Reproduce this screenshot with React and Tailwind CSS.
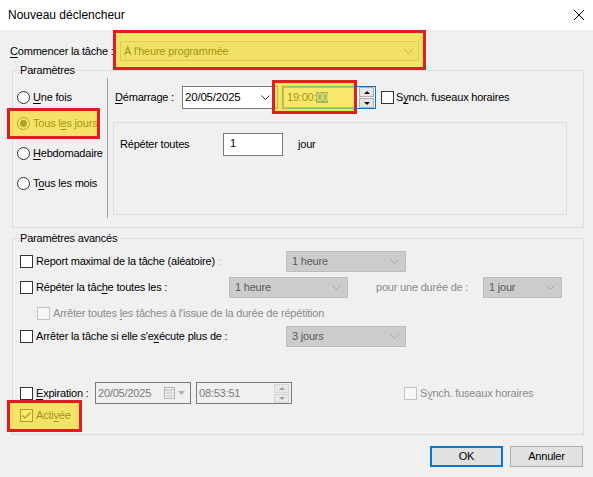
import React from 'react'

// Accélérateur clavier souligné (style Windows).
function U({ children }) {
  return <span className="underline decoration-1 underline-offset-[2px]">{children}</span>
}

function Chevron({ color = '#606060' }) {
  return (
    <svg width="9" height="5" viewBox="0 0 9 5" className="shrink-0">
      <polyline points="0.5,0.5 4.5,4.5 8.5,0.5" fill="none" stroke={color} strokeWidth="1" />
    </svg>
  )
}

function Radio({ checked }) {
  return (
    <span className="w-[13px] h-[13px] rounded-full border border-[#333] bg-white flex items-center justify-center shrink-0">
      {checked && <span className="w-[7px] h-[7px] rounded-full bg-[#333]" />}
    </span>
  )
}

function Check({ checked, disabled }) {
  if (disabled) return <span className="w-[13px] h-[13px] border border-[#c4c4c4] bg-[#f7f7f7] shrink-0" />
  return (
    <span className="w-[13px] h-[13px] border border-[#333] bg-white shrink-0 flex items-center justify-center">
      {checked && (
        <svg width="11" height="11" viewBox="0 0 11 11">
          <polyline points="1.5,5.5 4,8 9.5,2.5" fill="none" stroke="#222" strokeWidth="1.2" />
        </svg>
      )}
    </span>
  )
}

function Combo({ className, value }) {
  return (
    <div className={`h-[21px] bg-[#cccccc] border border-[#bdbdbd] flex items-center justify-between pl-[5px] pr-[6px] text-[#5a5a5a] ${className}`}>
      <span>{value}</span>
      <Chevron color="#a8a8a8" />
    </div>
  )
}

function Spin({ disabled }) {
  const c = disabled ? '#a0a0a0' : '#111'
  const btn = disabled
    ? 'h-[9px] bg-[#e8e8e8] border border-[#d4d4d4] flex items-center justify-center'
    : 'h-[10px] bg-[#e5e5e5] border border-[#adadad] flex items-center justify-center'
  return (
    <div className="flex flex-col gap-[1px] w-[15px] shrink-0">
      <div className={btn}>
        <svg width="6" height="3" viewBox="0 0 6 3"><polygon points="3,0 6,3 0,3" fill={c} /></svg>
      </div>
      <div className={btn}>
        <svg width="6" height="3" viewBox="0 0 6 3"><polygon points="0,0 6,0 3,3" fill={c} /></svg>
      </div>
    </div>
  )
}

function Highlight({ className }) {
  return <div className={`absolute border-[3px] border-[#e31b23] bg-[rgba(245,221,29,0.65)] ${className}`} />
}

export default function App() {
  return (
    <div className="w-[593px] h-[477px] bg-[#f0f0f0] relative overflow-hidden text-[11px] tracking-[-0.2px] leading-none text-black font-['Liberation_Sans',Arial,sans-serif]">
      {/* Barre de titre */}
      <div className="h-[30px] bg-white flex items-center justify-between pl-[8px] pr-[9px] text-[12px] tracking-normal">
        <span>Nouveau déclencheur</span>
        <svg width="10" height="10" viewBox="0 0 10 10">
          <line x1="0" y1="0" x2="10" y2="10" stroke="#000" strokeWidth="1" />
          <line x1="10" y1="0" x2="0" y2="10" stroke="#000" strokeWidth="1" />
        </svg>
      </div>

      {/* Commencer la tâche */}
      <div className="flex items-center h-[20px] mt-[11px] pl-[10px]">
        <span className="w-[110px]"><U>C</U>ommencer la tâche :</span>
        <div className="w-[299px] h-[20px] bg-[#e9e9e9] border border-[#adadad] flex items-center justify-between pl-[3px] pr-[5px]">
          <span>À l'heure programmée</span>
          <Chevron />
        </div>
      </div>

      {/* Paramètres */}
      <div className="relative mt-[9px] ml-[12px] w-[572px] h-[158px] border border-[#dcdcdc] flex">
        <span className="absolute left-[6px] -top-[6px] px-[1px] bg-[#f0f0f0]">Paramètres</span>

        <div className="w-[94px] pl-[4px] flex flex-col">
          <div className="flex items-center gap-[3px] h-[20px] mt-[16px]"><Radio /><span><U>U</U>ne fois</span></div>
          <div className="flex items-center gap-[3px] h-[20px] mt-[6px]"><Radio checked /><span>Tous l<U>e</U>s jours</span></div>
          <div className="flex items-center gap-[3px] h-[20px] mt-[10px]"><Radio /><span><U>H</U>ebdomadaire</span></div>
          <div className="flex items-center gap-[3px] h-[20px] mt-[10px]"><Radio /><span>T<U>o</U>us les mois</span></div>
        </div>

        <div className="w-px h-[140px] mt-[7px] bg-[#a0a0a0]" />

        <div className="flex flex-col">
          <div className="flex items-center h-[23px] mt-[15px] pl-[7px]">
            <span className="w-[67px]"><U>D</U>émarrage :</span>
            <div className="w-[96px] h-[23px] bg-white border border-[#7a7a7a] flex items-center justify-between pl-[2px] pr-[7px] text-[11.5px]">
              <span>20/05/2025</span>
              <Chevron color="#333" />
            </div>
            <div className="ml-[4px] w-[94px] h-[23px] border border-[#0078d7] bg-white flex items-center">
              <div className="flex-1 h-full border border-[#8a8a8a] flex items-center pl-[3px]">
                19:00:<span className="bg-[#0078d7] text-white">00</span>
              </div>
              <div className="ml-[3px] mr-[1px]"><Spin /></div>
            </div>
            <div className="ml-[5px]"><Check /></div>
            <span className="ml-[2px]">S<U>y</U>nch. fuseaux horaires</span>
          </div>

          <div className="ml-[5px] mt-[13px] w-[454px] h-[93px] border border-[#dcdcdc] pt-[10px] pl-[6px]">
            <div className="flex items-center h-[23px]">
              <span className="w-[103px]">Répéter toutes</span>
              <div className="w-[60px] h-[23px] bg-white border border-[#7a7a7a] pl-[6px] pt-[4px]">1</div>
              <span className="ml-[15px]">jour</span>
            </div>
          </div>
        </div>
      </div>

      {/* Paramètres avancés */}
      <div className="relative mt-[10px] ml-[12px] w-[572px] h-[197px] border border-[#dcdcdc] flex flex-col pl-[7px]">
        <span className="absolute left-[6px] -top-[6px] px-[1px] bg-[#f0f0f0]">Paramètres avancés</span>

        <div className="flex items-center h-[21px] mt-[12px]">
          <div className="w-[266px] flex items-center">
            <Check />
            <span className="ml-[3px]">Report maximal de la tâche (aléatoire) <span className="text-[#b4b4b4]">:</span></span>
          </div>
          <Combo className="w-[120px]" value="1 heure" />
        </div>

        <div className="flex items-center h-[21px] mt-[5px]">
          <div className="w-[209px] flex items-center">
            <Check />
            <span className="ml-[3px]">Répéter la tâc<U>h</U>e toutes les :</span>
          </div>
          <Combo className="w-[119px]" value="1 heure" />
          <span className="w-[107px] ml-[28px] text-[#8a8a8a]">pour une durée de :</span>
          <Combo className="w-[79px]" value="1 jour" />
        </div>

        <div className="flex items-center h-[20px] mt-[5px] pl-[17px]">
          <Check disabled />
          <span className="ml-[3px] text-[#8a8a8a]">Arrêter toutes <U>l</U>es tâches à l'issue de la durée de répétition</span>
        </div>

        <div className="flex items-center h-[21px] mt-[3px]">
          <div className="w-[266px] flex items-center">
            <Check />
            <span className="ml-[3px]">Arrêter la tâche si elle s'e<U>x</U>écute plus de :</span>
          </div>
          <Combo className="w-[120px]" value="3 jours" />
        </div>

        <div className="flex items-center h-[22px] mt-[35px]">
          <div className="w-[75px] flex items-center">
            <Check />
            <span className="ml-[3px]"><U>E</U>xpiration :</span>
          </div>
          <div className="w-[96px] h-[22px] border border-[#7a7a7a] flex items-center justify-between pl-[2px] pr-[5px] text-[#7a7a7a]">
            <span>20/05/2025</span>
            <span className="flex items-center gap-[3px]">
              <svg width="11" height="12" viewBox="0 0 11 12">
                <rect x="0.5" y="0.5" width="10" height="11" fill="#f4f4f4" stroke="#b5b5b5" />
                <line x1="0.5" y1="3" x2="10.5" y2="3" stroke="#b5b5b5" />
                <line x1="0.5" y1="6" x2="10.5" y2="6" stroke="#cfcfcf" />
                <line x1="0.5" y1="9" x2="10.5" y2="9" stroke="#cfcfcf" />
                <line x1="4" y1="3" x2="4" y2="11.5" stroke="#cfcfcf" />
                <line x1="7" y1="3" x2="7" y2="11.5" stroke="#cfcfcf" />
              </svg>
              <svg width="7" height="4" viewBox="0 0 7 4"><polygon points="0,0 7,0 3.5,4" fill="#b0b0b0" /></svg>
            </span>
          </div>
          <div className="ml-[5px] w-[96px] h-[22px] border border-[#7a7a7a] flex items-center justify-between pl-[2px] pr-[2px] text-[#7a7a7a]">
            <span>08:53:51</span>
            <Spin disabled />
          </div>
          <div className="ml-[112px] flex items-center">
            <Check disabled />
            <span className="ml-[3px] text-[#8a8a8a]">S<U>y</U>nch. fuseaux horaires</span>
          </div>
        </div>

        <div className="flex items-center h-[14px] mt-[4px]">
          <Check checked />
          <span className="ml-[3px]">Acti<U>v</U>ée</span>
        </div>
      </div>

      {/* Boutons */}
      <div className="mt-[11px] flex justify-end gap-[7px] pr-[10px]">
        <button className="w-[73px] h-[21px] border-2 border-[#0078d7] bg-[#e1e1e1] flex items-center justify-center">OK</button>
        <button className="w-[73px] h-[21px] border border-[#adadad] bg-[#e1e1e1] flex items-center justify-center">Annuler</button>
      </div>

      {/* Surlignages */}
      <Highlight className="left-[113px] top-[30px] w-[313px] h-[40px]" />
      <Highlight className="left-[272px] top-[80px] w-[85px] h-[34px]" />
      <Highlight className="left-[7px] top-[108px] w-[93px] h-[31px]" />
      <Highlight className="left-[7px] top-[400px] w-[75px] h-[32px]" />
    </div>
  )
}
